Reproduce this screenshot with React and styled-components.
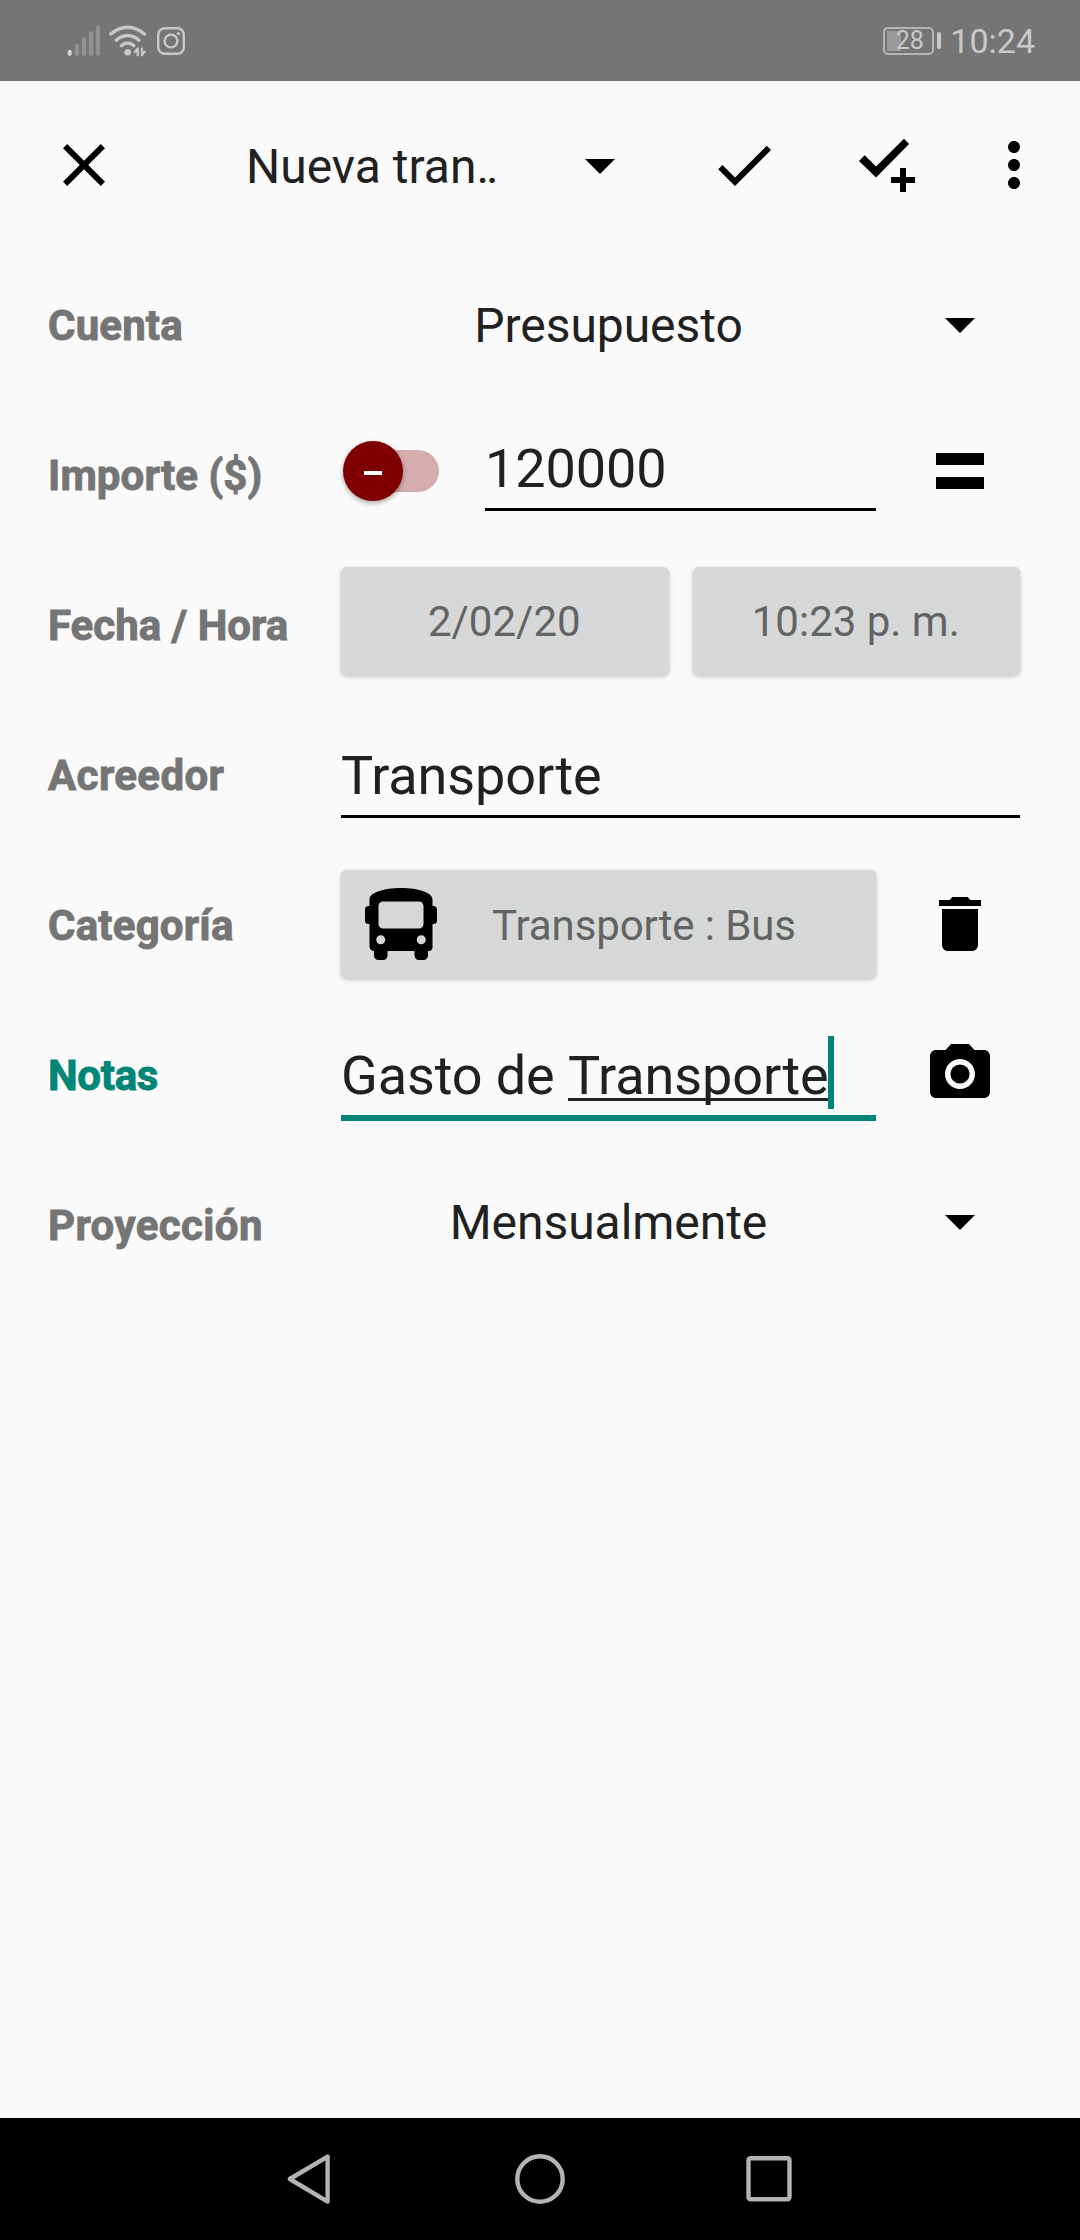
import React from 'react';
import styled, { createGlobalStyle } from 'styled-components';
import { FaBus } from 'react-icons/fa';
import {
  MdArrowDropDown,
  MdCheck,
  MdClose,
  MdDelete,
  MdMoreVert,
  MdPhotoCamera,
} from 'react-icons/md';

const ACCENT = '#008577';
const INK = '#212121';

const GlobalStyle = createGlobalStyle`
  *, *::before, *::after { box-sizing: border-box; }
  html, body { margin: 0; padding: 0; background: #fafafa; }
  body { font-family: Roboto, "Noto Sans", sans-serif; }
  button { font: inherit; color: inherit; border: 0; padding: 0; background: none; }
  svg { display: block; flex: none; }
`;

const Screen = styled.div`
  width: 1080px;
  height: 2240px;
  display: flex;
  flex-direction: column;
  background: #fafafa;
  color: ${INK};
  overflow: hidden;
`;

/* Status bar */
const StatusBar = styled.header`
  height: 81px;
  flex: none;
  display: flex;
  justify-content: space-between;
  padding: 0 45px 0 66px;
  background: #757575;
  color: #c8c8c8;
`;

const StatusGroup = styled.div`
  display: flex;
  align-items: center;
`;

const NotificationSlot = styled.div`
  margin-left: 10px;
`;

const Battery = styled.div`
  display: flex;
  align-items: center;
  gap: 3px;
  margin-right: 9px;
`;

const BatteryBody = styled.div`
  width: 51px;
  height: 28px;
  padding-left: 2px;
  border: 2px solid #b4b4b4;
  border-radius: 5px;
  background: linear-gradient(#999, #999) 2px 2px / 14px 20px no-repeat;
  font-size: 25px;
  line-height: 24px;
  text-align: center;
`;

const BatteryCap = styled.div`
  width: 4px;
  height: 17px;
  border-radius: 2px;
  background: #c8c8c8;
`;

const Clock = styled.span`
  font-size: 34px;
  line-height: 40px;
`;

/* Toolbar */
const Toolbar = styled.nav`
  height: 169px;
  flex: none;
  display: flex;
  align-items: flex-start;
  padding: 48px 30px 0 48px;
`;

const IconButton = styled.button`
  display: flex;
  width: 72px;
  height: 72px;
  margin-left: ${(p) => p.$gap || 0}px;
  color: #000;
`;

const Title = styled.h1`
  width: 318px;
  margin: 0 0 0 126px;
  padding-top: 10px;
  font-size: 48px;
  font-weight: 400;
  line-height: 56px;
  white-space: nowrap;
`;

const Truncation = styled.span`
  letter-spacing: -3px;
`;

/* Form */
const Form = styled.main`
  flex: 1;
  display: flex;
  flex-direction: column;
`;

const Row = styled.section`
  display: flex;
  align-items: flex-start;
  height: 150px;
  padding: 0 36px 0 48px;
`;

const Label = styled.label`
  width: 293px;
  flex: none;
  padding-top: 51px;
  font-size: 42px;
  font-weight: 700;
  letter-spacing: ${(p) => p.$tracking || 0}px;
  -webkit-text-stroke: 0.9px currentColor;
  line-height: 50px;
  white-space: nowrap;
  color: ${(p) => (p.$focused ? ACCENT : '#757575')};
`;

const Field = styled.div`
  width: ${(p) => (p.$wide ? 679 : 535)}px;
  flex: none;
  display: flex;
  align-items: flex-start;
`;

const Action = styled.button`
  width: 168px;
  display: flex;
  justify-content: center;
  padding-top: ${(p) => p.$top}px;
  color: #000;
`;

const SpinnerText = styled.div`
  flex: 1;
  padding-top: ${(p) => p.$top}px;
  text-align: center;
  font-size: 48px;
  letter-spacing: -0.05px;
  line-height: 56px;
`;

const Input = styled.div`
  flex: 1;
  display: flex;
  height: ${(p) => p.$height}px;
  padding-top: ${(p) => p.$top}px;
  border-bottom: ${(p) => (p.$focused ? `6px solid ${ACCENT}` : '3px solid #000')};
  font-size: 54px;
  letter-spacing: -0.1px;
  line-height: 64px;
  white-space: pre;
`;

const Composing = styled.span`
  text-decoration: underline;
  text-decoration-thickness: 3px;
  text-underline-offset: 4px;
  text-decoration-skip-ink: none;
`;

const Caret = styled.span`
  width: 6px;
  height: 73px;
  margin: -8px 0 0 -1px;
  background: ${ACCENT};
`;

const Switch = styled.div`
  width: 95px;
  height: 42px;
  margin: 50px 46px 0 3px;
  display: flex;
  align-items: center;
  border-radius: 21px;
  background: #d5adae;
`;

const Thumb = styled.div`
  width: 60px;
  height: 60px;
  margin-left: -1px;
  flex: none;
  display: flex;
  align-items: center;
  justify-content: center;
  border-radius: 50%;
  background: #7f0000;
  box-shadow: 0 2px 5px rgba(0, 0, 0, 0.35);
`;

const Minus = styled.div`
  width: 18px;
  height: 4px;
  margin-top: 4px;
  background: #fff;
`;

const ButtonPair = styled.div`
  display: flex;
  gap: 24px;
  width: 679px;
  padding-top: 17px;
`;

const RaisedButton = styled.button`
  flex: 1;
  display: flex;
  align-items: center;
  justify-content: center;
  height: 108px;
  padding: 2px 1px 0 0;
  border-radius: 6px;
  background: #d6d8d7;
  box-shadow: 0 2px 5px rgba(0, 0, 0, 0.2), 0 0 2px rgba(0, 0, 0, 0.1);
  color: #626463;
  font-size: 42px;
  line-height: 50px;
  white-space: nowrap;
`;

const CategoryButton = styled(RaisedButton)`
  margin-top: 20px;
  padding: 0 24px;
  letter-spacing: -0.1px;
  svg { color: #000; }
`;

const CategoryName = styled.span`
  flex: 1;
  text-align: center;
  padding: 3px 1px 0 0;
`;

/* System navigation */
const NavBar = styled.footer`
  height: 122px;
  flex: none;
  display: flex;
  align-items: center;
  padding-left: 286px;
  background: #000;
`;

const NavButton = styled.button`
  margin-right: ${(p) => p.$after || 0}px;
`;

const SignalIcon = () => (
  <svg width="38" height="36" viewBox="0 0 38 36" stroke="#929292" strokeWidth="4.2" strokeLinecap="round">
    <path d="M3.7 30.8v-2" stroke="#d2d2d2" />
    <path d="M11 30.8V22.8M18 30.8V16M25 30.8V10M32 30.8V4.4" />
  </svg>
);

const WifiIcon = () => (
  <svg width="42" height="36" viewBox="0 0 42 36" fill="none" stroke="currentColor" strokeWidth="3.4" strokeLinecap="round">
    <path d="M6.8 11Q23.6-2.4 40.4 11M12.3 17.2Q23.6 8 34.9 17.2M17.4 22.6Q23.6 17.6 29.8 22.6" />
    <circle cx="23.6" cy="29.2" r="3.3" fill="currentColor" stroke="none" />
    <path d="M34.9 24.6v8.6h-2.2v-3.4H29l4-5.2zM36.9 24.6h2.2v3.4h3.4l-4 5.2h-1.6z" fill="currentColor" stroke="none" />
  </svg>
);

const CameraAppIcon = () => (
  <svg width="30" height="30" viewBox="0 0 30 30" fill="none" stroke="currentColor" strokeWidth="2.4">
    <rect x="2.2" y="2.2" width="25.6" height="25.6" rx="6.5" />
    <circle cx="15" cy="15" r="6.4" />
    <circle cx="22.4" cy="7.6" r="1.7" fill="currentColor" stroke="none" />
  </svg>
);

const SaveAndNewIcon = () => (
  <svg width="72" height="72" viewBox="0 0 72 72">
    <path d="M7 32l5.7-5.7L24 37.6 52 9.7l5 5.3-33 33.6z" />
    <path d="M48 39h6v9h9v6h-9v9h-6v-9h-9v-6h9z" />
  </svg>
);

const EqualsIcon = () => (
  <svg width="72" height="72" viewBox="0 0 72 72">
    <path d="M12 18h48v12H12zM12 42h48v12H12z" />
  </svg>
);

const BackIcon = () => (
  <svg width="44" height="52" viewBox="0 0 44 52" fill="none" stroke="#b3b3b3" strokeWidth="4.4" strokeLinejoin="round">
    <path d="M41.6 3.6v45L3.8 26z" />
  </svg>
);

const HomeIcon = () => (
  <svg width="52" height="52" viewBox="0 0 52 52" fill="none" stroke="#b3b3b3" strokeWidth="4.4">
    <circle cx="26" cy="26" r="22.7" />
  </svg>
);

const RecentsIcon = () => (
  <svg width="48" height="48" viewBox="0 0 48 48" fill="none" stroke="#b3b3b3" strokeWidth="4.4">
    <rect x="3.5" y="3.2" width="41" height="41" rx="2" />
  </svg>
);

export default function App() {
  return (
    <>
      <GlobalStyle />
      <Screen>
        <StatusBar>
          <StatusGroup>
            <SignalIcon />
            <WifiIcon />
            <NotificationSlot><CameraAppIcon /></NotificationSlot>
          </StatusGroup>
          <StatusGroup>
            <Battery>
              <BatteryBody>28</BatteryBody>
              <BatteryCap />
            </Battery>
            <Clock>10:24</Clock>
          </StatusGroup>
        </StatusBar>

        <Toolbar>
          <IconButton aria-label="Cerrar"><MdClose size={72} /></IconButton>
          <Title>Nueva tran<Truncation>..</Truncation></Title>
          <IconButton><MdArrowDropDown size={72} /></IconButton>
          <IconButton $gap={72}><MdCheck size={72} /></IconButton>
          <IconButton $gap={72}><SaveAndNewIcon /></IconButton>
          <IconButton $gap={54}><MdMoreVert size={72} /></IconButton>
        </Toolbar>

        <Form>
          <Row>
            <Label $tracking={0.15}>Cuenta</Label>
            <Field><SpinnerText $top={48}>Presupuesto</SpinnerText></Field>
            <Action $top={38}><MdArrowDropDown size={72} /></Action>
          </Row>
          <Row>
            <Label $tracking={0.1}>Importe ($)</Label>
            <Field>
              <Switch><Thumb><Minus /></Thumb></Switch>
              <Input $height={111} $top={37}>120000</Input>
            </Field>
            <Action $top={35}><EqualsIcon /></Action>
          </Row>
          <Row>
            <Label>Fecha / Hora</Label>
            <ButtonPair>
              <RaisedButton>2/02/20</RaisedButton>
              <RaisedButton>10:23 p. m.</RaisedButton>
            </ButtonPair>
          </Row>
          <Row>
            <Label $tracking={0.4}>Acreedor</Label>
            <Field $wide><Input $height={118} $top={44}>Transporte</Input></Field>
          </Row>
          <Row>
            <Label $tracking={0.2}>Categoría</Label>
            <Field>
              <CategoryButton>
                <FaBus size={72} />
                <CategoryName>Transporte : Bus</CategoryName>
              </CategoryButton>
            </Field>
            <Action $top={38}><MdDelete size={72} /></Action>
          </Row>
          <Row>
            <Label $focused $tracking={-0.3}>Notas</Label>
            <Field>
              <Input $focused $height={121} $top={44}>
                Gasto de <Composing>Transporte</Composing>
                <Caret />
              </Input>
            </Field>
            <Action $top={38}><MdPhotoCamera size={72} /></Action>
          </Row>
          <Row>
            <Label $tracking={0.4}>Proyección</Label>
            <Field><SpinnerText $top={45}>Mensualmente</SpinnerText></Field>
            <Action $top={35}><MdArrowDropDown size={72} /></Action>
          </Row>
        </Form>

        <NavBar>
          <NavButton $after={184}><BackIcon /></NavButton>
          <NavButton $after={179}><HomeIcon /></NavButton>
          <NavButton><RecentsIcon /></NavButton>
        </NavBar>
      </Screen>
    </>
  );
}
